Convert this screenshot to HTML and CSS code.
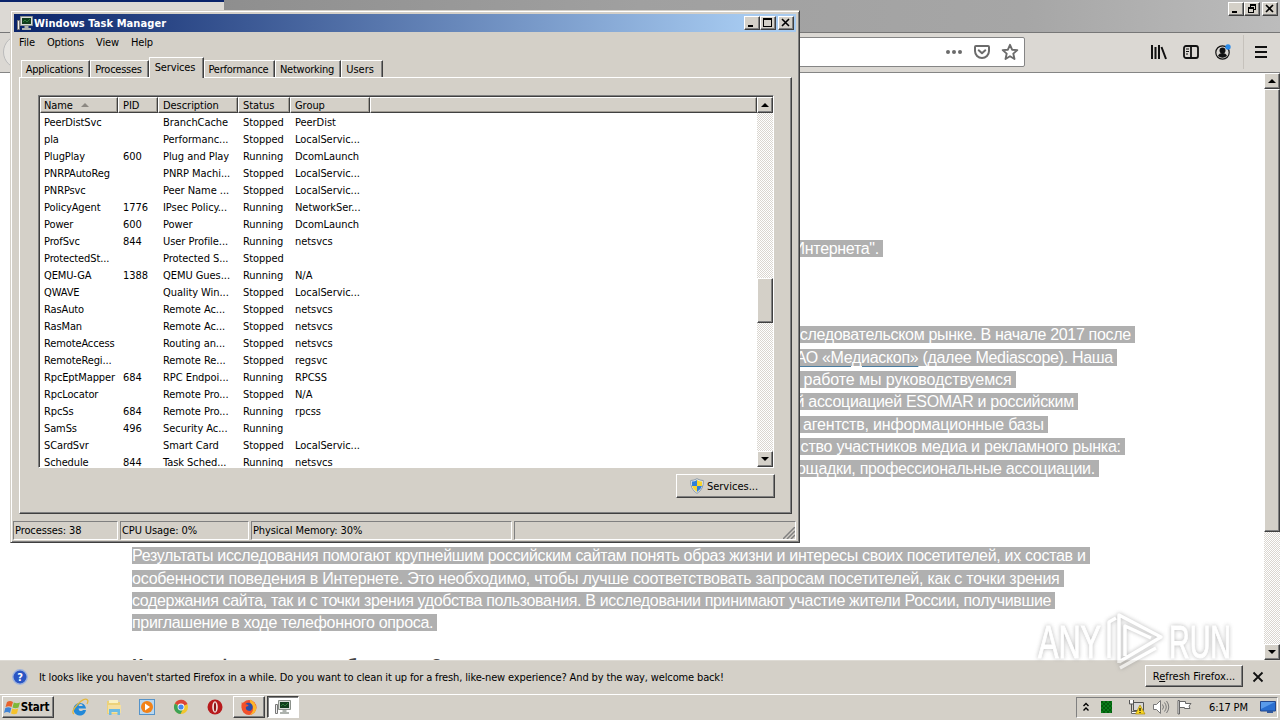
FILE: index.html
```html
<!DOCTYPE html>
<html lang="en">
<head>
    <meta charset="UTF-8">
    <title>Desktop</title>
    <link rel="stylesheet" href="styles.css">
</head>
<body>
    <div class="desktop">
        <div class="browser">
            <div class="browser-title">
                <div class="browser-tab"></div>
                <div class="win-buttons">
                    <span class="win-btn"><svg viewBox="0 0 12 10"><path d="M2 7h5v2H2z"/></svg></span>
                    <span class="win-btn"><svg viewBox="0 0 12 10"><path d="M4 0h6v6H8V5h1V2H5v1H4zM2 3h6v6H2zM3 5v3h4V5z" fill-rule="evenodd"/></svg></span>
                    <span class="win-btn close"><svg viewBox="0 0 12 10"><path d="M2 1l7 7M9 1L2 8" stroke="#000" stroke-width="1.6"/></svg></span>
                </div>
            </div>
            <div class="toolbar">
                <span class="back"></span>
                <div class="urlbar">
                    <svg width="18" height="18" viewBox="0 0 18 18" fill="#6b6b6b"><circle cx="3" cy="9" r="2"/><circle cx="9" cy="9" r="2"/><circle cx="15" cy="9" r="2"/></svg>
                    <svg width="18" height="18" viewBox="0 0 18 18" fill="none" stroke="#6b6b6b" stroke-width="2" stroke-linecap="round" stroke-linejoin="round"><path d="M3 3h12q1 0 1 1v4a7 7 0 0 1-14 0V4q0-1 1-1zM5.7 7.3L9 10.3l3.3-3"/></svg>
                    <svg width="18" height="18" viewBox="0 0 18 18" fill="none" stroke="#6b6b6b" stroke-width="1.9" stroke-linejoin="round"><path d="M9 1.8l2.1 4.9 5.2.4-4 3.5 1.2 5.4L9 13.2 4.5 16l1.2-5.4-4-3.5 5.2-.4z"/></svg>
                </div>
                <div class="tools">
                    <svg width="18" height="18" viewBox="0 0 18 18" stroke="#111" stroke-width="2"><path d="M2 2v14M5.5 4v12M9 2v14M11.5 4l4.5 12"/></svg>
                    <svg width="18" height="18" viewBox="0 0 18 18" fill="none" stroke="#111" stroke-width="1.8"><rect x="2" y="3" width="14" height="12" rx="2"/><path d="M9 3v12"/><path d="M4 6h3M4 8.5h3M4 11h2" stroke-width="1"/></svg>
                    <svg width="18" height="18" viewBox="0 0 18 18"><circle cx="8.5" cy="9.5" r="6.7" fill="none" stroke="#111" stroke-width="1.2"/><circle cx="8.5" cy="7.5" r="3" fill="#111"/><path d="M4 13q1-3 4.500-3t4.500 3q-4.500 3.500-9 0z" fill="#111"/><circle cx="14" cy="4" r="2.700" fill="#2a8ae8"/></svg>
                    <span class="divider"></span>
                    <svg width="18" height="18" viewBox="0 0 18 18" stroke="#111" stroke-width="2"><path d="M3 4h12M3 9h12M3 14h12"/></svg>
                </div>
            </div>
            <div class="content">
                <div class="page">
                    <div class="upper">
                        <p class="single"><span>Интернета". </span></p>
                        <p class="l1"><span>следовательском рынке. В начале 2017 после </span></p>
                        <p class="l2"><span><a>АО «Медиаскоп»</a> (далее Mediascope). Наша </span></p>
                        <p class="l3"><span> работе мы руководствуемся </span></p>
                        <p class="l4"><span>й ассоциацией ESOMAR и российским </span></p>
                        <p class="l5"><span> агентств, информационные базы </span></p>
                        <p class="l6"><span>ство участников медиа и рекламного рынка: </span></p>
                        <p class="l7"><span>ощадки, профессиональные ассоциации. </span></p>
                    </div>
                    <div class="lower">
                        <p class="r1"><span>Результаты исследования помогают крупнейшим российским сайтам понять образ жизни и интересы своих посетителей, их состав и </span></p>
                        <p class="r2"><span>особенности поведения в Интернете. Это необходимо, чтобы лучше соответствовать запросам посетителей, как с точки зрения </span></p>
                        <p class="r3"><span>содержания сайта, так и с точки зрения удобства пользования. В исследовании принимают участие жители России, получившие </span></p>
                        <p class="r4"><span>приглашение в ходе телефонного опроса. </span></p>
                    </div>
                    <h2><span>К</span><span>ф</span><span>б</span><span>?</span></h2>
                </div>
                <div class="scrollbar">
                    <span class="sb-btn up"></span>
                    <span class="sb-thumb"></span>
                    <span class="sb-btn down"></span>
                </div>
            </div>
            <div class="notice">
                <svg width="16" height="16" viewBox="0 0 16 16"><circle cx="8" cy="8" r="7.2" fill="#2b56c4" stroke="#9fb4de" stroke-width="1.4"/><text x="8" y="12" class="help">?</text></svg>
                <span class="notice-text">It looks like you haven't started Firefox in a while. Do you want to clean it up for a fresh, like-new experience? And by the way, welcome back!</span>
                <span class="btn refresh"><span>R<u>e</u>fresh Firefox...</span></span>
                <svg width="12" height="12" viewBox="0 0 12 12"><path d="M1.5 1.5l9 9M10.5 1.5l-9 9" stroke="#111" stroke-width="1.8"/></svg>
            </div>
        </div>

        <div class="taskbar">
            <span class="btn start">
                <svg width="17" height="17" viewBox="0 0 17 17"><path d="M3 3q3-2 6 0L7.500 8Q5 6.500 1.500 8z" fill="#e8622c"/><path d="M9.800 3.500q3 1.500 6.200 0L14.500 8.500q-3 1.500-6 0z" fill="#7db83a"/><path d="M1.300 9q3-1.500 6 0L6 14q-3-2-6 0z" fill="#3f83d6"/><path d="M8.200 9.500q3 1.500 6 0L13 14.500q-3 1.500-6 0z" fill="#f5c22c"/></svg>
                Start
            </span>
            <div class="launch">
                <svg width="18" height="18" viewBox="0 0 18 18"><path d="M15 10.500H7.500q.5 3 2.500 2.500 1.500 0 2-1h3a6.300 6.300 0 1 1 0-1.500zM7.500 8h4.300q-.3-2-2.100-2T7.500 8z" fill="#2389d8" fill-rule="evenodd"/><path d="M3 16Q-.5 14 6.500 6.500T16.500 2q1 1-.5 4" fill="none" stroke="#e3b73c" stroke-width="1.3"/></svg>
                <svg width="18" height="18" viewBox="0 0 18 18"><path d="M2 3h5l1 1h7v12H2z" fill="#ecd27a"/><path d="M4 2h9v3H4z" fill="#f9f2c4"/><path d="M3 7h13v8H3z" fill="#f4dfa0"/><path d="M4 17v-6h11v6h-2.500v-3h-6v3z" fill="#6bbbe4"/></svg>
                <svg width="18" height="18" viewBox="0 0 18 18"><rect x="1.5" y="1.5" width="15" height="15" fill="#b9d7ef" stroke="#5593c9"/><circle cx="9" cy="9" r="6" fill="#f28218"/><path d="M7 5.500v7l5-3.500z" fill="#fff"/></svg>
                <svg width="18" height="18" viewBox="0 0 18 18"><circle cx="9" cy="9" r="7" fill="#f2c62e"/><path d="M9 9L2.900 5.500A7 7 0 0 1 15.500 6z" fill="#dc4437"/><path d="M2.900 5.500A7 7 0 0 0 8.500 16L11 11z" fill="#3da256"/><circle cx="9" cy="9" r="3.4" fill="#fff"/><circle cx="9" cy="9" r="2.6" fill="#4688ec"/></svg>
                <svg width="18" height="18" viewBox="0 0 18 18"><circle cx="9" cy="9" r="7.5" fill="#b81a1c"/><ellipse cx="9" cy="9" rx="2.8" ry="5.8" fill="#f1e4e0"/><ellipse cx="9" cy="9" rx="1.1" ry="4.6" fill="#8d1414"/></svg>
            </div>
            <span class="btn task">
                <svg width="18" height="18" viewBox="0 0 18 18"><circle cx="9" cy="9.5" r="7.5" fill="#f0502c"/><path d="M10 1.500q6 3 6.500 8.500-.5 5.500-7 7 5-4 3-9-3-2-2.500-6.500z" fill="#fdb52a"/><circle cx="8.500" cy="9" r="4.200" fill="#2b4ca8"/><path d="M1.800 4q1 2 3 2 3 0 4 2-3 0-3 2 0 3 5 3-3 3-7 0-3-3-2-9z" fill="#f4502a"/></svg>
            </span>
            <span class="task pressed">
                <svg width="18" height="16" viewBox="0 0 18 16"><use href="#monitor"/></svg>
            </span>
            <div class="tray">
                <svg class="chevrons" width="8" height="10" viewBox="0 0 8 10" fill="none" stroke="#000" stroke-width="1.4"><path d="M1.500 4L4 1.500 6.500 4M1.500 8.500L4 6l2.500 2.500"/></svg>
                <span class="meter"></span>
                <svg class="net" width="18" height="16" viewBox="0 0 18 16"><path d="M5.500 3.500h10v8h-10z" fill="#d8d8d8" stroke="#555"/><path d="M1.500 1v4h4V1M3.500 5v8" fill="#fff" stroke="#555"/><path d="M3.500 12.500h6v2h-6z" fill="#fff" stroke="#666"/><path d="M12 6l5 9H7.500z" fill="#f8d521" stroke="#a98a10" stroke-width=".7"/><path d="M12 9v3M12 13v1" stroke="#111" stroke-width="1.200"/></svg>
                <svg class="speaker" width="18" height="16" viewBox="0 0 18 16" fill="none" stroke="#777"><path d="M1.500 5.500h3l4-4v13l-4-4h-3z" fill="#fff"/><path d="M10.500 5.500q2 2.500 0 5M12.500 3.500q3.500 4.500 0 9M14.500 2q4.500 6 0 12"/></svg>
                <svg class="flag" width="17" height="16" viewBox="0 0 17 16"><path d="M2 1.500h1.500V15H2zM3.500 2.500h6v2h5.500l-2 2.500 1 2.500H8.500v-1h-5z" fill="#fff" stroke="#666"/></svg>
                <span class="clock">6:17 PM</span>
                <svg class="show" width="16" height="14" viewBox="0 0 16 14"><path d="M.5 1.500h15v9.500H.5z" fill="#2a6fd0" stroke="#23478c"/><path d="M1 2h14L1 9z" fill="#5a9bea"/><path d="M7 11h6v2H7z" fill="#31589c"/></svg>
            </div>
        </div>

        <div class="manager">
            <div class="title-bar">
                <svg width="18" height="16" viewBox="0 0 18 16">
                    <g id="monitor"><path d="M1.500 5.500h2v9h-2z" fill="#eee" stroke="#777"/><path d="M4.500 1.500h12v9h-12z" fill="#d9ddd9" stroke="#8b918b"/><path d="M6 3h9v6H6z" fill="#103d1c"/><path d="M7 7l2-2 2 2 3-3" fill="none" stroke="#2c7a38"/><path d="M8.500 11h4v2h-4zM6 13h9v2H6z" fill="#aeb3ae"/></g>
                </svg>
                <span class="caption">Windows Task Manager</span>
                <div class="win-buttons">
                    <span class="win-btn"><svg viewBox="0 0 12 10"><path d="M2 7h5v2H2z"/></svg></span>
                    <span class="win-btn"><svg viewBox="0 0 12 10"><path d="M1 0h9v9H1zM2 2v6h7V2z" fill-rule="evenodd"/></svg></span>
                    <span class="win-btn close"><svg viewBox="0 0 12 10"><path d="M2 1l7 7M9 1L2 8" stroke="#000" stroke-width="1.6"/></svg></span>
                </div>
            </div>
            <div class="menu"><span>File</span><span>Options</span><span>View</span><span>Help</span></div>
            <div class="tabs">
                <span class="tab t-app">Applications</span>
                <span class="tab t-proc">Processes</span>
                <span class="tab t-serv active">Services</span>
                <span class="tab t-perf">Performance</span>
                <span class="tab t-net">Networking</span>
                <span class="tab t-user">Users</span>
            </div>
            <div class="panel">
                <div class="list">
                    <div class="table">
                        <div class="row head"><span>Name <i class="sort"></i></span><span>PID</span><span>Description</span><span>Status</span><span>Group</span><span></span></div>
                        <div id="rows"></div>
                    </div>
                    <div class="scrollbar">
                        <span class="sb-btn up"></span>
                        <span class="sb-track"></span>
                        <span class="sb-thumb"></span>
                        <span class="sb-btn down"></span>
                    </div>
                </div>
                <span class="btn services">
                    <svg width="16" height="16" viewBox="0 0 16 16"><path d="M8 .7Q11 2.500 14.300 2.500 15 11 8 15.400 1 11 1.700 2.500 5 2.500 8 .7z" fill="#e9eef2" stroke="#8b9aa8"/><path d="M8 2Q5.500 3.500 3 3.600L3 8h5z" fill="#2f7fd8"/><path d="M8 2q2.500 1.500 5 1.600V8H8z" fill="#f8d42c"/><path d="M3 8h5v6Q4 11.500 3 8z" fill="#f8d42c"/><path d="M8 8h5q-1 3.500-5 6z" fill="#2f7fd8"/></svg>
                    Services...
                </span>
            </div>
            <div class="status">
                <span>Processes: 38</span><span>CPU Usage: 0%</span><span>Physical Memory: 30%</span>
                <span class="last"><svg width="12" height="12" viewBox="0 0 12 12" stroke="#808080" stroke-width="1.5"><path d="M0 12L12 0M4 12l8-8M8 12l4-4"/></svg></span>
            </div>
        </div>

        <svg class="watermark" width="204" height="68" viewBox="0 0 204 68">
            <text x="5" y="52" textLength="63" lengthAdjust="spacingAndGlyphs">ANY</text>
            <path d="M76 52V16l7-4M86 57V9l42 22-42 25M92 50V20l26 12M87 62l36-20" fill="none" stroke="#fff" stroke-width="3.5" stroke-linejoin="round"/>
            <text x="136" y="52" textLength="62" lengthAdjust="spacingAndGlyphs">RUN</text>
        </svg>
    </div>
    <script>
        const services = [
            ["PeerDistSvc", "", "BranchCache", "Stopped", "PeerDist"],
            ["pla", "", "Performanc...", "Stopped", "LocalServic..."],
            ["PlugPlay", "600", "Plug and Play", "Running", "DcomLaunch"],
            ["PNRPAutoReg", "", "PNRP Machi...", "Stopped", "LocalServic..."],
            ["PNRPsvc", "", "Peer Name ...", "Stopped", "LocalServic..."],
            ["PolicyAgent", "1776", "IPsec Policy...", "Running", "NetworkSer..."],
            ["Power", "600", "Power", "Running", "DcomLaunch"],
            ["ProfSvc", "844", "User Profile...", "Running", "netsvcs"],
            ["ProtectedSt...", "", "Protected S...", "Stopped", ""],
            ["QEMU-GA", "1388", "QEMU Gues...", "Running", "N/A"],
            ["QWAVE", "", "Quality Win...", "Stopped", "LocalServic..."],
            ["RasAuto", "", "Remote Ac...", "Stopped", "netsvcs"],
            ["RasMan", "", "Remote Ac...", "Stopped", "netsvcs"],
            ["RemoteAccess", "", "Routing an...", "Stopped", "netsvcs"],
            ["RemoteRegi...", "", "Remote Re...", "Stopped", "regsvc"],
            ["RpcEptMapper", "684", "RPC Endpoi...", "Running", "RPCSS"],
            ["RpcLocator", "", "Remote Pro...", "Stopped", "N/A"],
            ["RpcSs", "684", "Remote Pro...", "Running", "rpcss"],
            ["SamSs", "496", "Security Ac...", "Running", ""],
            ["SCardSvr", "", "Smart Card", "Stopped", "LocalServic..."],
            ["Schedule", "844", "Task Sched...", "Running", "netsvcs"]
        ];

        const rows = document.getElementById("rows");
        services.forEach((service) => {
            const row = document.createElement("div");
            row.className = "row";
            service.forEach((value) => {
                const cell = document.createElement("span");
                cell.innerText = value;
                row.appendChild(cell);
            });
            rows.appendChild(row);
        });
    </script>
</body>
</html>
```
FILE: styles.css
```css
* {
    box-sizing: border-box;
}

body {
    margin: 0;
    font-family: "DejaVu Sans Condensed", "DejaVu Sans", sans-serif;
    font-size: 11px;
    letter-spacing: -0.15px;
    color: #000;
    overflow: hidden;
}

svg {
    display: block;
    flex: none;
}

p, h2 {
    margin: 0;
}

.desktop {
    position: relative;
    width: 1280px;
    height: 720px;
    display: flex;
    flex-direction: column;
    background: #d4d0c8;
    overflow: hidden;
    white-space: nowrap;
}

/* Browser */
.browser {
    height: 694px;
    display: flex;
    flex-direction: column;
}

.browser-title {
    height: 33px;
    display: flex;
    justify-content: space-between;
    background: linear-gradient(90deg, #858585, #a0a0a0 50%, #a6a6a6 80%, #bcbcbc);
    border-bottom: 1px solid #777;
}

.browser-tab {
    width: 224px;
    background: #dcd9d4;
    border-top: 2px solid #0a246a;
}

.win-buttons {
    display: flex;
    padding: 2px 2px 0 0;
}

.win-btn {
    width: 16px;
    height: 14px;
    padding: 1px;
    background: #d4d0c8;
    border: 1px solid;
    border-color: #fff #404040 #404040 #fff;
    box-shadow: inset -1px -1px #808080;
}

.win-btn svg {
    width: 12px;
    height: 10px;
}

.close {
    margin-left: 2px;
}

.toolbar {
    height: 41px;
    display: flex;
    align-items: center;
    background: #dbd8d3;
    border-bottom: 1px solid #858585;
}

.back {
    width: 34px;
    height: 34px;
    margin-left: 3px;
    background: #e6e4e0;
    border: 1px solid #bbb;
    border-radius: 50%;
}

.urlbar {
    width: 925px;
    height: 30px;
    margin-left: 63px;
    padding-right: 5px;
    display: flex;
    align-items: center;
    justify-content: flex-end;
    gap: 10px;
    background: #fff;
    border: 1px solid #858585;
    border-radius: 2px;
}

.tools {
    flex: 1;
    height: 100%;
    padding-right: 10px;
    display: flex;
    align-items: center;
    justify-content: flex-end;
    gap: 14px;
}

.divider {
    width: 1px;
    height: 34px;
    margin: 0 -6px 0 -3px;
    background: #c6c2bc;
}

.content {
    height: 587px;
    display: flex;
    justify-content: space-between;
    background: #fff;
}

.page {
    width: 1264px;
    padding-top: 165px;
    overflow: hidden;
    font-family: "Liberation Sans", Arial, sans-serif;
    font-size: 16px;
    line-height: 22.35px;
    color: #fff;
}

.page p {
    height: 22.35px;
    white-space: pre;
    letter-spacing: -0.31px;
}

.page p span {
    background: #b0b0b0;
}

.page a {
    text-decoration: underline #4a7da0 1px;
    text-underline-offset: 3px;
}

.upper {
    height: 307px;
    text-align: right;
}

/* the selection runs on beneath the window in front */
.upper span {
    padding-left: 12px;
}

.page .single {
    height: 86px;
    padding-right: 381px;
}

.page .l1 { padding-right: 129px; }
.page .l2 { padding-right: 147px; }
.page .l3 { padding-right: 248px; letter-spacing: -0.07px; }
.page .l4 { padding-right: 186px; }
.page .l5 { padding-right: 216px; letter-spacing: -0.2px; }
.page .l6 { padding-right: 139px; letter-spacing: -0.23px; }
.page .l7 { padding-right: 165px; }

.lower {
    height: 107px;
    padding-left: 132px;
}

.page .r2 { letter-spacing: -0.225px; }
.page .r3 { letter-spacing: -0.34px; }

.page h2 {
    display: grid;
    grid-template-columns: 85px 129px 85px 20px;
    padding: 1px 0 0 132px;
    font-size: 18px;
    line-height: 26px;
    color: #444;
}

/* Classic scrollbars */
.scrollbar {
    width: 16px;
    display: flex;
    flex-direction: column;
    background: repeating-conic-gradient(#fff 0 25%, #dad6d0 0 50%) 0 0 / 2px 2px;
}

.sb-btn, .sb-thumb, .btn {
    background: #d4d0c8;
    border: 1px solid;
    border-color: #fff #404040 #404040 #fff;
    box-shadow: inset -1px -1px #808080;
}

.sb-btn {
    height: 16px;
    display: flex;
    align-items: center;
    justify-content: center;
}

.sb-btn::after {
    content: "";
    border: 4px solid transparent;
    border-top-width: 0;
    border-bottom-color: #000;
}

.sb-btn.down::after {
    border-top: 4px solid #000;
    border-bottom-width: 0;
}

.sb-btn.down {
    margin-top: auto;
}

.content .sb-thumb {
    height: 443px;
}

.notice {
    height: 34px;
    padding: 0 16px 2px 12px;
    display: flex;
    align-items: center;
    background: #d4d0c8;
    border-top: 1px solid #dedbd5;
}

.help {
    font-size: 11px;
    font-weight: bold;
    fill: #fff;
    text-anchor: middle;
}

.notice-text {
    flex: 1;
    padding: 2px 0 0 11px;
    letter-spacing: -0.14px;
}

.btn {
    display: flex;
    align-items: center;
    justify-content: center;
}

.refresh {
    width: 98px;
    height: 22px;
    margin: -1px 9px 0 0;
    letter-spacing: 0;
}

/* Taskbar */
.taskbar {
    height: 26px;
    padding: 0 2px 1px;
    display: flex;
    align-items: center;
    border-top: 1px solid #fff;
}

.start {
    width: 52px;
    height: 22px;
    padding-right: 3px;
    font-size: 11.5px;
    font-weight: bold;
}

.launch {
    width: 179px;
    padding-left: 17px;
    display: flex;
    gap: 15.7px;
}

.task {
    width: 32px;
    height: 22px;
}

.pressed {
    margin-left: 2px;
    display: flex;
    align-items: center;
    justify-content: center;
    background: #fff;
    border: 1px solid;
    border-color: #404040 #fff #fff #404040;
    box-shadow: inset 1px 1px #808080;
}

.tray {
    width: 202px;
    height: 21px;
    margin-left: auto;
    padding: 0 1px 0 5px;
    display: flex;
    align-items: center;
    border: 1px solid;
    border-color: #808080 #fff #fff #808080;
}

.meter {
    width: 11px;
    height: 12px;
    margin: 0 16px 0 11px;
    background: repeating-conic-gradient(#087c18 0 25%, #035a0c 0 50%) 0 0 / 4px 4px;
}

.speaker {
    margin: 0 6px 0 6px;
}

.clock {
    margin: 0 auto 0 16px;
}

/* Task Manager */
.manager {
    position: absolute;
    left: 10px;
    top: 10px;
    width: 790px;
    height: 533px;
    padding: 2px;
    background: #d4d0c8;
    border: 1px solid;
    border-color: #d4d0c8 #404040 #404040 #d4d0c8;
    box-shadow: inset 1px 1px #fff, inset -1px -1px #808080;
}

.title-bar {
    height: 18px;
    margin: 1px;
    padding-left: 2px;
    display: flex;
    align-items: center;
    background: linear-gradient(90deg, #0a246a, #a6caf0 94%);
}

.caption {
    flex: 1;
    font-weight: bold;
    letter-spacing: 0.08px;
    color: #fff;
}

.title-bar .win-buttons {
    padding: 0 2px 0 0;
}

.menu {
    height: 24px;
    padding: 3px 6px 0;
    display: flex;
    gap: 12px;
}

.tabs {
    height: 20px;
    margin: 0 7px 0 8px;
    display: flex;
    align-items: flex-end;
}

.tab {
    height: 17px;
    padding-right: 2px;
    text-align: center;
    line-height: 17px;
    letter-spacing: -0.25px;
    border-top: 1px solid #fff;
    border-left: 1px solid #fff;
    border-right: 1px solid #404040;
    box-shadow: inset -1px 0 #808080;
}

.active {
    height: 21px;
    margin-bottom: -1px;
    padding-right: 3px;
    line-height: 19px;
    background: #d4d0c8;
    z-index: 1;
}

.t-app { width: 69px; }
.t-proc { width: 59px; }
.t-serv { width: 55px; letter-spacing: -0.15px; }
.t-perf { width: 71px; }
.t-net { width: 66px; }
.t-user { width: 42px; padding-right: 4px; letter-spacing: 0; }

.panel {
    height: 437px;
    margin: 0 5px 0 6px;
    padding: 17px 17px 0 18px;
    border: 1px solid;
    border-color: #fff #404040 #404040 #fff;
    box-shadow: inset -1px -1px #808080;
}

.list {
    height: 373px;
    display: flex;
    background: #fff;
    border: 1px solid;
    border-color: #808080 #fff #fff #808080;
    box-shadow: inset 1px 1px #404040;
    padding: 1px 0 0 1px;
}

.table {
    flex: 1;
    overflow: hidden;
}

.row {
    height: 17px;
    display: grid;
    grid-template-columns: 78px 40px 80px 52px 80px 1fr;
    line-height: 19px;
    letter-spacing: -0.05px;
}

.row span {
    padding-left: 5px;
    overflow: hidden;
}

.row span:first-child {
    padding-left: 4px;
    letter-spacing: -0.12px;
}

.head {
    height: 16px;
    line-height: 15px;
    background: #d4d0c8;
}

.head span {
    border: 1px solid;
    border-color: #fff #404040 #404040 #fff;
    padding-left: 4px;
    box-shadow: inset -1px -1px #a09c94;
}

.head span:first-child {
    padding-left: 3px;
}

.sort {
    display: inline-block;
    margin: 0 0 2px 5px;
    border: 4px solid transparent;
    border-top-width: 0;
    border-bottom-color: #8c8882;
}

.sb-track {
    height: 165px;
}

.list .sb-thumb {
    height: 45px;
}

.services {
    width: 99px;
    height: 24px;
    margin: 6px -1px 0 auto;
    padding-right: 4px;
    gap: 2px;
    letter-spacing: 0;
}

.status {
    height: 18px;
    margin: 7px 1px 0 0;
    display: grid;
    grid-template-columns: 105px 129px 261px 1fr;
    gap: 2px;
    line-height: 17px;
    letter-spacing: -0.1px;
}

.status span {
    padding-left: 1px;
    border: 1px solid;
    border-color: #808080 #fff #fff #808080;
}

.status .last {
    display: flex;
    align-items: flex-end;
    justify-content: flex-end;
}

/* Corner logo */
.watermark {
    position: absolute;
    left: 1033px;
    top: 606px;
    opacity: 0.6;
    filter: drop-shadow(0 0 2px #888);
}

.watermark text {
    font: 47px "Liberation Sans", sans-serif;
    fill: #fff;
    stroke: #fff;
    stroke-width: 1px;
}
```
